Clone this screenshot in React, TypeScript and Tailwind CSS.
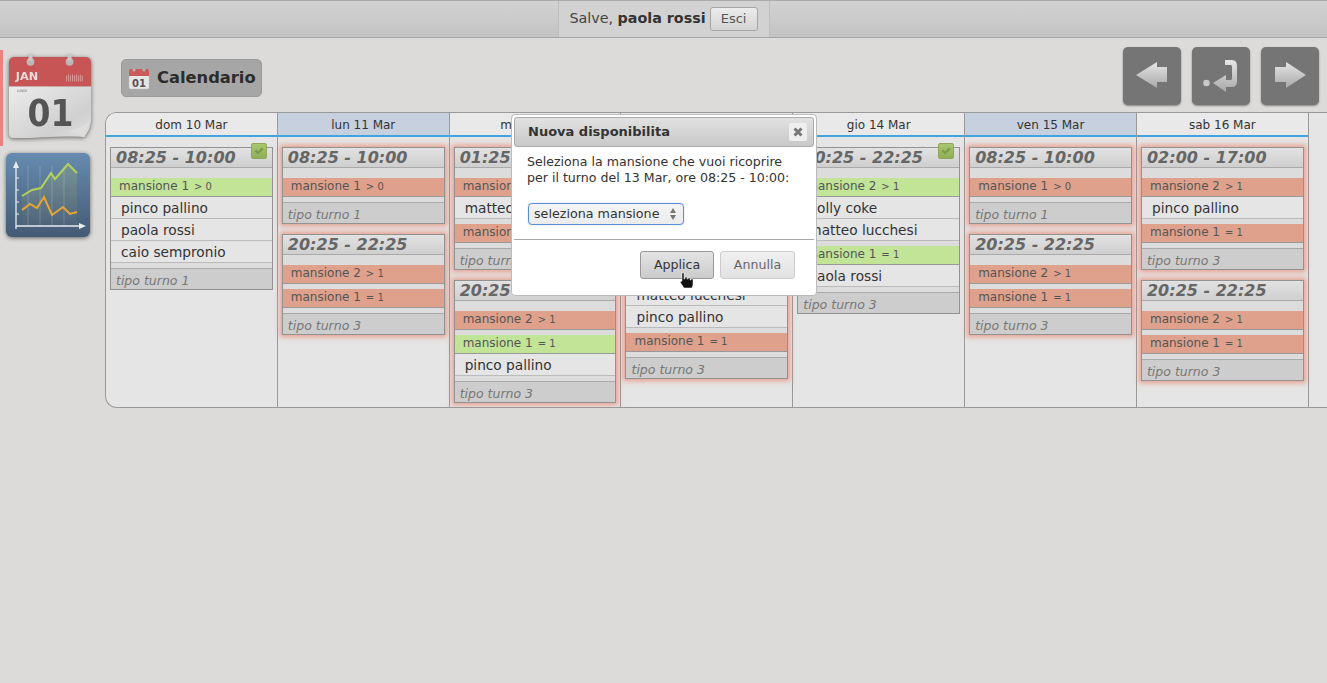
import React from "react";

type Section = { label: string; cmp: string; ok?: boolean; names?: string[] };
type Shift = { time: string; tipo: string; glow?: boolean; check?: boolean; sections: Section[] };
type Day = { title: string; blue?: boolean; shifts: Shift[] };

const s20: Shift = {
  time: "20:25 - 22:25",
  tipo: "tipo turno 3",
  glow: true,
  sections: [
    { label: "mansione 2", cmp: "> 1" },
    { label: "mansione 1", cmp: "= 1" },
  ],
};
const s08: Shift = {
  time: "08:25 - 10:00",
  tipo: "tipo turno 1",
  glow: true,
  sections: [{ label: "mansione 1", cmp: "> 0" }],
};

const days: Day[] = [
  {
    title: "dom 10 Mar",
    shifts: [
      {
        time: "08:25 - 10:00",
        tipo: "tipo turno 1",
        check: true,
        sections: [{ label: "mansione 1", cmp: "> 0", ok: true, names: ["pinco pallino", "paola rossi", "caio sempronio"] }],
      },
    ],
  },
  { title: "lun 11 Mar", blue: true, shifts: [s08, s20] },
  {
    title: "mar 12 Mar",
    shifts: [
      {
        time: "01:25 - 22:25",
        tipo: "tipo turno 3",
        glow: true,
        sections: [
          { label: "mansione 2", cmp: "> 1", names: ["matteo lucchesi"] },
          { label: "mansione 1", cmp: "= 1" },
        ],
      },
      {
        time: "20:25 - 22:25",
        tipo: "tipo turno 3",
        glow: true,
        sections: [
          { label: "mansione 2", cmp: "> 1" },
          { label: "mansione 1", cmp: "= 1", ok: true, names: ["pinco pallino"] },
        ],
      },
    ],
  },
  {
    title: "mer 13 Mar",
    shifts: [
      s08,
      {
        time: "20:25 - 22:25",
        tipo: "tipo turno 3",
        glow: true,
        sections: [
          { label: "mansione 2", cmp: "> 1", names: ["matteo lucchesi", "pinco pallino"] },
          { label: "mansione 1", cmp: "= 1" },
        ],
      },
    ],
  },
  {
    title: "gio 14 Mar",
    shifts: [
      {
        time: "20:25 - 22:25",
        tipo: "tipo turno 3",
        check: true,
        sections: [
          { label: "mansione 2", cmp: "> 1", ok: true, names: ["polly coke", "matteo lucchesi"] },
          { label: "mansione 1", cmp: "= 1", ok: true, names: ["paola rossi"] },
        ],
      },
    ],
  },
  { title: "ven 15 Mar", blue: true, shifts: [s08, s20] },
  {
    title: "sab 16 Mar",
    shifts: [
      {
        time: "02:00 - 17:00",
        tipo: "tipo turno 3",
        glow: true,
        sections: [
          { label: "mansione 2", cmp: "> 1", names: ["pinco pallino"] },
          { label: "mansione 1", cmp: "= 1" },
        ],
      },
      s20,
    ],
  },
];

function CheckBadge() {
  return (
    <div className="absolute right-[5px] top-[-5px] flex h-[16px] w-[16px] items-center justify-center rounded-[2px] border border-[#8fa75c] bg-gradient-to-b from-[#a9c76e] to-[#8fae55]">
      <svg width="12" height="12" viewBox="0 0 12 12">
        <path d="M1.5 6.2 L3.2 4.6 L5 6.4 L9 2.6 L10.6 4.2 L5 9.6 Z" fill="#7a9a4c" />
      </svg>
    </div>
  );
}

function ShiftCard({ shift }: { shift: Shift }) {
  return (
    <div
      className={
        "relative mx-[4px] mb-[10px] border border-[#929292] bg-[#dcdcdc] " +
        (shift.glow ? "shadow-[0_0_5px_2px_rgba(235,110,85,0.6)]" : "")
      }
    >
      {shift.check && <CheckBadge />}
      <div className="h-[20px] border-b border-[#aaa] bg-gradient-to-b from-[#e2e2e2] to-[#cfcfcf] pl-[5px] text-[16px] leading-[20px] font-bold italic text-[#666]">
        {shift.time}
      </div>
      <div className="pt-[10px]">
        {shift.sections.map((sec, i) => (
          <div key={i} className="mb-[5px]">
            <div
              className={
                "flex h-[19px] items-baseline gap-[5px] border-b border-[#999] pl-[8px] text-[12px] leading-[16px] text-[#555] " +
                (sec.ok ? "bg-[#c1e497]" : "bg-[#dfa18b]")
              }
            >
              <span>{sec.label}</span>
              <span className="text-[10px]">{sec.cmp}</span>
            </div>
            {(sec.names ?? []).map((n) => (
              <div key={n} className="h-[22px] border-b border-[#bbb] bg-[#e5e5e5] pl-[10px] text-[13.7px] leading-[23px] text-[#333]">
                {n}
              </div>
            ))}
          </div>
        ))}
      </div>
      <div className="h-[21px] border-t border-[#aaa] bg-[#cdcdcd] pl-[5px] text-[12.5px] leading-[23px] italic text-[#777]">
        {shift.tipo}
      </div>
    </div>
  );
}

function CalendarIcon() {
  return (
    <svg width="86" height="88" viewBox="0 0 88 90" className="drop-shadow-[0_1px_2px_rgba(0,0,0,0.55)]">
      <defs>
        <linearGradient id="calpage" x1="0" y1="0" x2="1" y2="1">
          <stop offset="0" stopColor="#ececec" />
          <stop offset="0.7" stopColor="#d0d0d0" />
          <stop offset="1" stopColor="#e0e0e0" />
        </linearGradient>
      </defs>
      <path d="M1 32 H85 V66 C84 76 82 78 78 84 C60 82 30 85 6 85 Q1 85 1 80 Z" fill="url(#calpage)" />
      <path d="M1 8 Q1 2 7 2 H79 Q85 2 85 8 V32 H1 Z" fill="#c85555" />
      <path d="M78 84 C80 76 80 74 85 66 C80 72 70 76 62 78 C68 79 73 81 78 84 Z" fill="#dedede" />
      <circle cx="23" cy="7" r="4" fill="#bdb6b6" />
      <rect x="21" y="0" width="4" height="6" fill="#c9c9c9" />
      <circle cx="63" cy="7" r="4" fill="#bdb6b6" />
      <rect x="61" y="0" width="4" height="6" fill="#c9c9c9" />
      <text x="8" y="26" fontSize="11.5" fontWeight="700" fill="#e8dcdc" fontFamily="DejaVu Sans">JAN</text>
      <path d="M60 27 V21 M62 27 V20 M64 27 V21 M66 27 V20 M68 27 V21 M70 27 V20 M72 27 V21 M74 27 V20 M76 27 V21" stroke="#dd9a9a" strokeWidth="1" />
      <text x="9" y="38" fontSize="3.5" fill="#777" fontFamily="DejaVu Sans">LUNDI</text>
      <text x="20" y="73" fontSize="39" fontWeight="700" fill="#555" fontFamily="DejaVu Sans" textLength="47" lengthAdjust="spacingAndGlyphs">01</text>
    </svg>
  );
}

function ChartIcon() {
  return (
    <svg width="86" height="87" viewBox="0 0 86 87" className="drop-shadow-[0_1px_2px_rgba(0,0,0,0.55)]">
      <defs>
        <linearGradient id="chartbg" x1="0" y1="0" x2="0" y2="1">
          <stop offset="0" stopColor="#668bb0" />
          <stop offset="1" stopColor="#445b74" />
        </linearGradient>
        <linearGradient id="chartfill" x1="0" y1="0" x2="0" y2="1">
          <stop offset="0" stopColor="#b6d060" stopOpacity="0.22" />
          <stop offset="1" stopColor="#e8a732" stopOpacity="0.03" />
        </linearGradient>
      </defs>
      <rect x="1" y="1" width="84" height="84" rx="6" fill="url(#chartbg)" />
      <path d="M17 44 L27 38 L36 36 L46 21 L50 27 L63 12 L72 21 V74 H17 Z" fill="url(#chartfill)" />
      <g stroke="#ffffff" strokeOpacity="0.18" strokeWidth="1">
        <path d="M23 14 V74 M35 14 V74 M47 14 V74 M59 14 V74" />
      </g>
      <path d="M11 74 H75" stroke="#e8edf2" strokeWidth="1.3" />
      <path d="M11 15 V77" stroke="#e8edf2" strokeWidth="1.3" />
      <path d="M11 9 L8 16 H14 Z M81 74 L74 71 V77 Z" fill="#e8edf2" />
      <path d="M11 26 H14 M11 38 H14 M11 50 H14 M11 62 H14" stroke="#e8edf2" strokeWidth="1" />
      <path d="M17 44 L27 38 L36 36 L46 21 L50 27 L63 12 L72 21" fill="none" stroke="#b4d15a" strokeWidth="2" />
      <path d="M17 58 L25 52 L32 56 L39 45 L47 63 L58 55 L65 62 L72 60" fill="none" stroke="#e8a732" strokeWidth="2" />
    </svg>
  );
}

function SmallCal() {
  return (
    <svg width="22" height="23" viewBox="0 0 22 23">
      <rect x="1" y="7" width="20" height="15" rx="1.5" fill="#e6e6e6" stroke="#bbb" strokeWidth="0.5" />
      <path d="M1 9 V4 Q1 2 3 2 H19 Q21 2 21 4 V9 Z" fill="#c95b5b" />
      <circle cx="6" cy="3" r="1.5" fill="#b5b5b5" />
      <circle cx="16" cy="3" r="1.5" fill="#b5b5b5" />
      <text x="4" y="19.5" fontSize="10" fontWeight="700" fill="#555" fontFamily="DejaVu Sans">01</text>
    </svg>
  );
}

function NavButton({ children }: { children: React.ReactNode }) {
  return (
    <div className="flex h-[58px] w-[58px] items-center justify-center rounded-[5px] bg-[#757575] shadow-[0_1px_2px_rgba(0,0,0,0.4)]">
      {children}
    </div>
  );
}

function NavGrad({ id }: { id: string }) {
  return (
    <defs>
      <linearGradient id={id} x1="0" y1="0" x2="0" y2="1">
        <stop offset="0" stopColor="#e6e6e6" />
        <stop offset="1" stopColor="#a8a8a8" />
      </linearGradient>
    </defs>
  );
}

export default function App() {
  return (
    <div className="relative min-h-[683px] overflow-hidden bg-[#dcdbd9] font-['DejaVu_Sans',sans-serif] text-[#333]">
      <header className="flex h-[38px] justify-center border-y border-t-[#aaa] border-b-[#a8a8a8] bg-gradient-to-b from-[#d2d2d2] to-[#c3c3c3]">
        <div className="flex w-[212px] items-center justify-center gap-[4px] border-x border-[#bdbdbd] bg-[#d2d2d2] text-[14.3px] text-[#444]">
          <span>
            Salve, <b className="font-bold text-[#333]">paola rossi</b>
          </span>
          <span className="flex h-[24px] w-[48px] items-center justify-center rounded-[3px] border border-[#a5a5a5] bg-gradient-to-b from-[#ececec] to-[#d4d4d4] text-[13px] text-[#555]">
            Esci
          </span>
        </div>
      </header>

      <div className="flex">
        <aside className="relative h-[210px] w-[105px] shrink-0">
          <div className="absolute left-0 top-[12px] h-[96px] w-[3px] bg-[#ee8080]" />
          <div className="absolute left-[8px] top-[17px]">
            <CalendarIcon />
          </div>
          <div className="absolute left-[5px] top-[114px]">
            <ChartIcon />
          </div>
        </aside>

        <main className="min-w-0 flex-1">
          <div className="flex h-[74px] items-start justify-between">
            <div className="ml-[16px] mt-[21px] flex h-[38px] w-[141px] items-center gap-[7px] rounded-[5px] border border-[#999] bg-[#a6a6a6] pl-[6px] text-[16.3px] font-bold text-[#2c2c2c]">
              <SmallCal />
              <span>Calendario</span>
            </div>
            <div className="mr-[8px] mt-[9px] flex gap-[11px]">
              <NavButton>
                <svg width="40" height="30" viewBox="0 0 40 30">
                  <NavGrad id="nl" />
                  <path d="M4 14 L25 1 V6 H35 V21 H25 V27 Z" fill="url(#nl)" />
                </svg>
              </NavButton>
              <NavButton>
                <svg width="40" height="36" viewBox="0 0 40 36">
                  <NavGrad id="nm" />
                  <circle cx="5.5" cy="25" r="3.3" fill="#c8c8c8" />
                  <path d="M12 25 L25 17 V22 H30 Q31 22 31 20 V9 Q31 7 30 7 H24 V2 H31 Q36 2 36 8 V23 Q36 29 31 29 H25 V34 Z" fill="url(#nm)" />
                </svg>
              </NavButton>
              <NavButton>
                <svg width="40" height="30" viewBox="0 0 40 30">
                  <NavGrad id="nr" />
                  <path d="M36 14 L16 1 V6 H5 V21 H16 V27 Z" fill="url(#nr)" />
                </svg>
              </NavButton>
            </div>
          </div>

          <div className="flex h-[296px] overflow-hidden rounded-l-[12px] border-y border-l border-[#999] bg-[#e5e5e5]">
            {days.map((d) => (
              <div key={d.title} className="w-[171.83px] shrink-0 border-r border-[#999]">
                <div
                  className={
                    "mb-[10px] h-[24px] border-b-2 border-[#3fa4e0] text-center text-[12px] leading-[24px] text-[#333] " +
                    (d.blue ? "bg-[#c6d0df]" : "bg-[#e9e9e9]")
                  }
                >
                  {d.title}
                </div>
                {d.shifts.map((s, i) => (
                  <ShiftCard key={i} shift={s} />
                ))}
              </div>
            ))}
          </div>
        </main>
      </div>

      <div className="absolute left-[511px] top-[114px] h-[182px] w-[306px] rounded-[4px] border border-[#bbb] bg-white p-[2px]">
        <div className="flex h-[30px] items-center justify-between rounded-[3px] border border-[#aaa] bg-gradient-to-b from-[#e2e2e2] to-[#c8c8c8] pl-[13px] pr-[6px] text-[13px] font-bold text-[#333]">
          <span>Nuova disponibilita</span>
          <span className="flex h-[18px] w-[18px] items-center justify-center rounded-[2px] bg-[#eeeeee] text-[#777]">
            <svg width="12" height="12" viewBox="0 0 12 12">
              <path d="M2.5 2.5 L9.5 9.5 M9.5 2.5 L2.5 9.5" stroke="#777" strokeWidth="3" />
            </svg>
          </span>
        </div>
        <p className="ml-[13px] mt-[7px] text-[12.6px] leading-[16px] text-[#333]">
          Seleziona la mansione che vuoi ricoprire
          <br />
          per il turno del 13 Mar, ore 08:25 - 10:00:
        </p>
        <div className="ml-[14px] mt-[17px] flex h-[22px] w-[156px] items-center justify-between rounded-[4px] border border-[#5a8fd8] bg-gradient-to-b from-[#f4f4f4] to-[#ececec] pl-[5px] pr-[6px] text-[12.7px] text-[#333] shadow-[0_0_1px_#5a8fd8]">
          <span>seleziona mansione</span>
          <svg width="8" height="16" viewBox="0 0 8 16">
            <path d="M4 2 L7 7 H1 Z M4 14 L1 9 H7 Z" fill="#777" />
          </svg>
        </div>
        <div className="mt-[14px] border-t border-[#aaa]" />
        <div className="mr-[19px] mt-[11px] flex justify-end gap-[6px] text-[12.6px]">
          <span className="flex h-[28px] w-[74px] items-center justify-center rounded-[3px] border border-[#999] bg-gradient-to-b from-[#e4e4e4] to-[#cbcbcb] text-[#333]">
            Applica
          </span>
          <span className="flex h-[28px] w-[75px] items-center justify-center rounded-[3px] border border-[#ccc] bg-gradient-to-b from-[#f0f0f0] to-[#e2e2e2] text-[#666]">
            Annulla
          </span>
        </div>
      </div>

      <svg className="absolute left-[679px] top-[272px]" width="16" height="18" viewBox="0 0 16 18">
        <path
          d="M3 1 H5 V7 H6 V5 H8 V7 H9 V6 H11 V8 H12 V7 H14 V13 L13 16 H5 L1 10 L3 9 Z"
          fill="#111"
          stroke="#fff"
          strokeWidth="0.5"
        />
      </svg>
    </div>
  );
}
